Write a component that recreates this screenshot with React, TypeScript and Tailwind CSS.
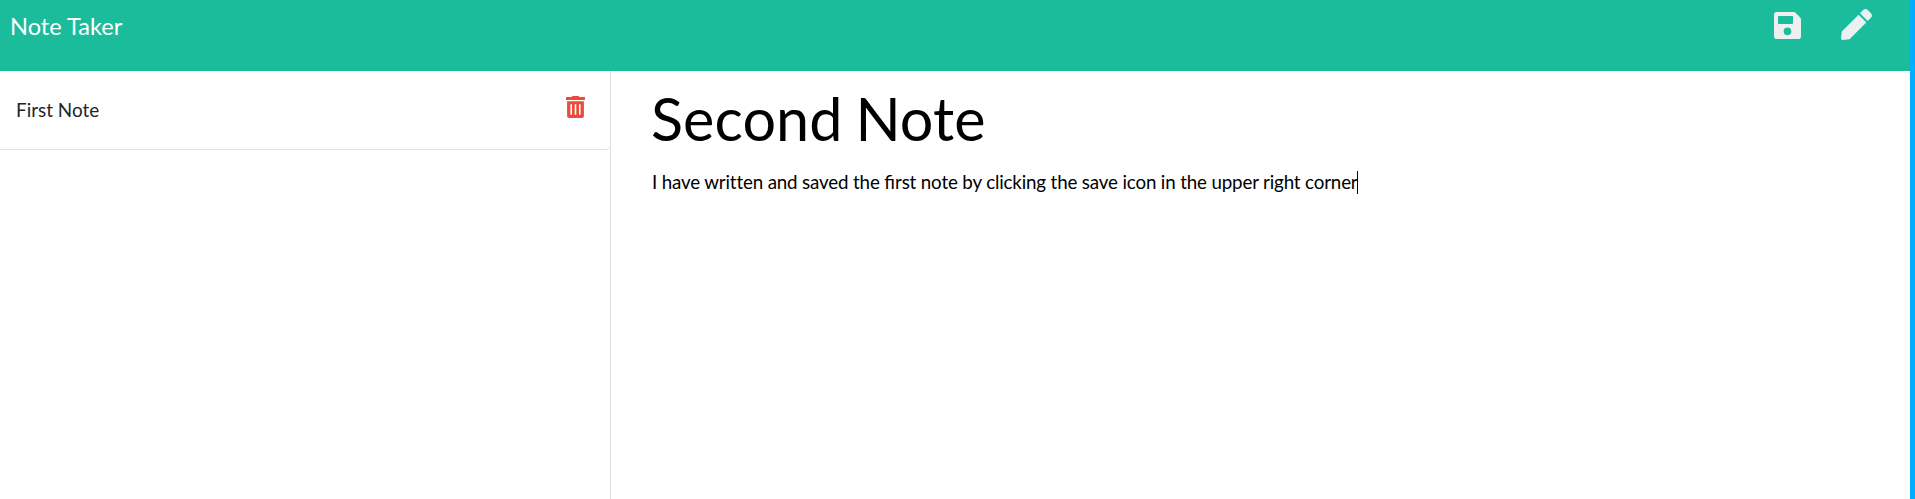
import { FaPen } from "react-icons/fa";

function SaveIcon() {
  return (
    <svg width="27" height="27" viewBox="0 0 27 27" fill="currentColor" aria-hidden="true">
      <path
        fillRule="evenodd"
        d="M2.8 0H19.6Q20.8 0 21.6.8L26.2 5.4Q27 6.2 27 7.4V24.2Q27 27 24.2 27H2.8Q0 27 0 24.2V2.8Q0 0 2.8 0ZM4.8 4Q4 4 4 4.8V11.2Q4 12 4.8 12H18.2Q19 12 19 11.2V4.8Q19 4 18.2 4ZM13.5 15.5A3.85 3.85 0 1 0 13.5 23.2A3.85 3.85 0 1 0 13.5 15.5Z"
      />
    </svg>
  );
}

function TrashIcon() {
  return (
    <svg width="19" height="22" viewBox="0 0 19 22" fill="currentColor" aria-hidden="true">
      <path d="M6.4 0H12.6L13.3 1H18.4Q19 1 19 1.6V3.4Q19 4 18.4 4H.6Q0 4 0 3.4V1.6Q0 1 .6 1H5.7Z" />
      <path
        fillRule="evenodd"
        d="M1.1 5.2H17.9V20Q17.9 22 15.9 22H3.1Q1.1 22 1.1 20ZM4.4 8.3V18.7H6V8.3ZM8.7 8.3V18.7H10.3V8.3ZM13 8.3V18.7H14.6V8.3Z"
      />
    </svg>
  );
}

function Header() {
  return (
    <header className="flex h-[71px] shrink-0 items-start justify-between bg-[#1abc9c] pl-[10px] pr-[38px]">
      <h1 className="mt-[8px] text-[23.6px] leading-[36px] text-white">Note Taker</h1>
      <div className="flex gap-[40px] text-[#ecf0f1]">
        <button aria-label="Save note" className="mt-[11px]">
          <SaveIcon />
        </button>
        <button aria-label="New note" className="mt-[9px]">
          <FaPen className="h-[31px] w-[31px]" />
        </button>
      </div>
    </header>
  );
}

function NoteList() {
  return (
    <aside className="w-[611px] shrink-0 border-r border-[#dfdfdf]">
      <ul>
        <li className="flex h-[79px] items-start justify-between rounded-br-[4px] border-b border-[#dfdfdf] pl-[16px] pr-[25px]">
          <span className="mt-[25px] text-[18.9px] leading-[28px] text-[#212529]">First Note</span>
          <button aria-label="Delete note" className="mt-[25px] text-[#e74c3c]">
            <TrashIcon />
          </button>
        </li>
      </ul>
    </aside>
  );
}

function Editor() {
  return (
    <section className="flex flex-1 flex-col pl-[41px] text-black">
      <h2 className="-ml-px mt-[11px] h-[72px] text-[59.3px] leading-[72px] tracking-[0.1px] [word-spacing:-2.5px]">
        Second Note
      </h2>
      <p className="mt-[14px] flex items-center whitespace-nowrap text-[18.75px] leading-[28px]">
        <span className="tracking-[-0.156px]">
          I have written and saved the <span className="tracking-normal">fi</span>rst note by clicking the save icon in
          the upper right corner
        </span>
        <span className="-ml-px h-[23px] w-px bg-black" />
      </p>
    </section>
  );
}

export default function App() {
  return (
    <div className="flex h-[499px] w-full overflow-hidden bg-white font-['Lato',sans-serif]">
      <div className="flex flex-1 flex-col">
        <Header />
        <main className="flex flex-1">
          <NoteList />
          <Editor />
        </main>
      </div>
      <div className="w-[5px] shrink-0 bg-[#00adff]" />
    </div>
  );
}
